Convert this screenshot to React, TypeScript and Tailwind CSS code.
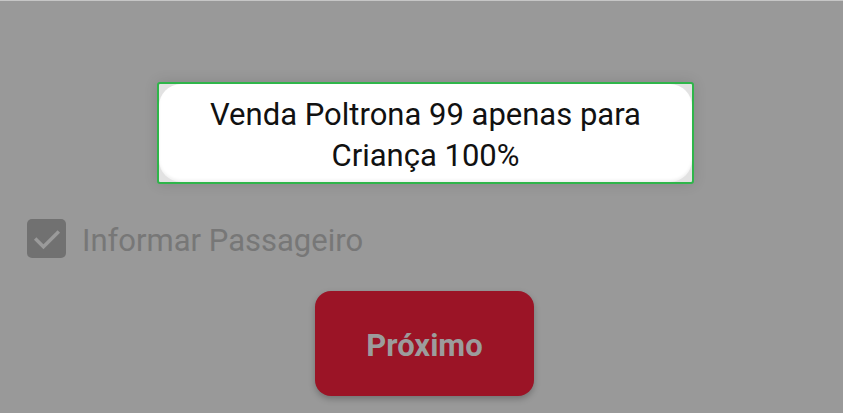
import React from "react";

const font = { fontFamily: "Roboto, 'Noto Sans', sans-serif" };

export default function App() {
  return (
    <div
      className="w-[843px] h-[413px] overflow-hidden bg-[#999999] border-t border-[#c6c6c6] flex flex-col"
      style={font}
    >
      {/* Toast */}
      <div className="mt-[81px] ml-[157px] w-[537px] h-[102px] border-2 border-[#2fb54a] rounded-[3px] bg-[#e2e2e2] shadow-[0_0_14px_rgba(0,0,0,0.12)]">
        <div className="h-full rounded-[22px] bg-white flex items-center justify-center text-center pt-[4px] shadow-[inset_0_-2px_3px_rgba(0,0,0,0.06)]">
          <p className="text-[31px] leading-[41px] text-[#111111] px-6">
            Venda Poltrona 99 apenas para
            <br />
            Criança 100%
          </p>
        </div>
      </div>

      {/* Checkbox row */}
      <div className="mt-[35px] ml-[27px] flex items-center gap-[16px]">
        <div className="w-[39px] h-[39px] rounded-[5px] bg-[#717171] flex items-center justify-center">
          <svg width="34" height="34" viewBox="0 0 24 24" fill="none">
            <path
              d="M4.5 12.5l5 5 10-10"
              stroke="#9a9a9a"
              strokeWidth="2.4"
              strokeLinecap="square"
            />
          </svg>
        </div>
        <span className="text-[31px] text-[#777777] leading-none pt-[3px]">Informar Passageiro</span>
      </div>

      {/* Button */}
      <div className="mt-[33px] ml-[315px]">
        <button className="w-[219px] h-[105px] rounded-[16px] bg-[#9b1426] shadow-[0_3px_6px_rgba(0,0,0,0.25)] flex items-center justify-center pt-[6px]">
          <span className="text-[31px] font-bold text-[#9c9c9c]">Próximo</span>
        </button>
      </div>
    </div>
  );
}
